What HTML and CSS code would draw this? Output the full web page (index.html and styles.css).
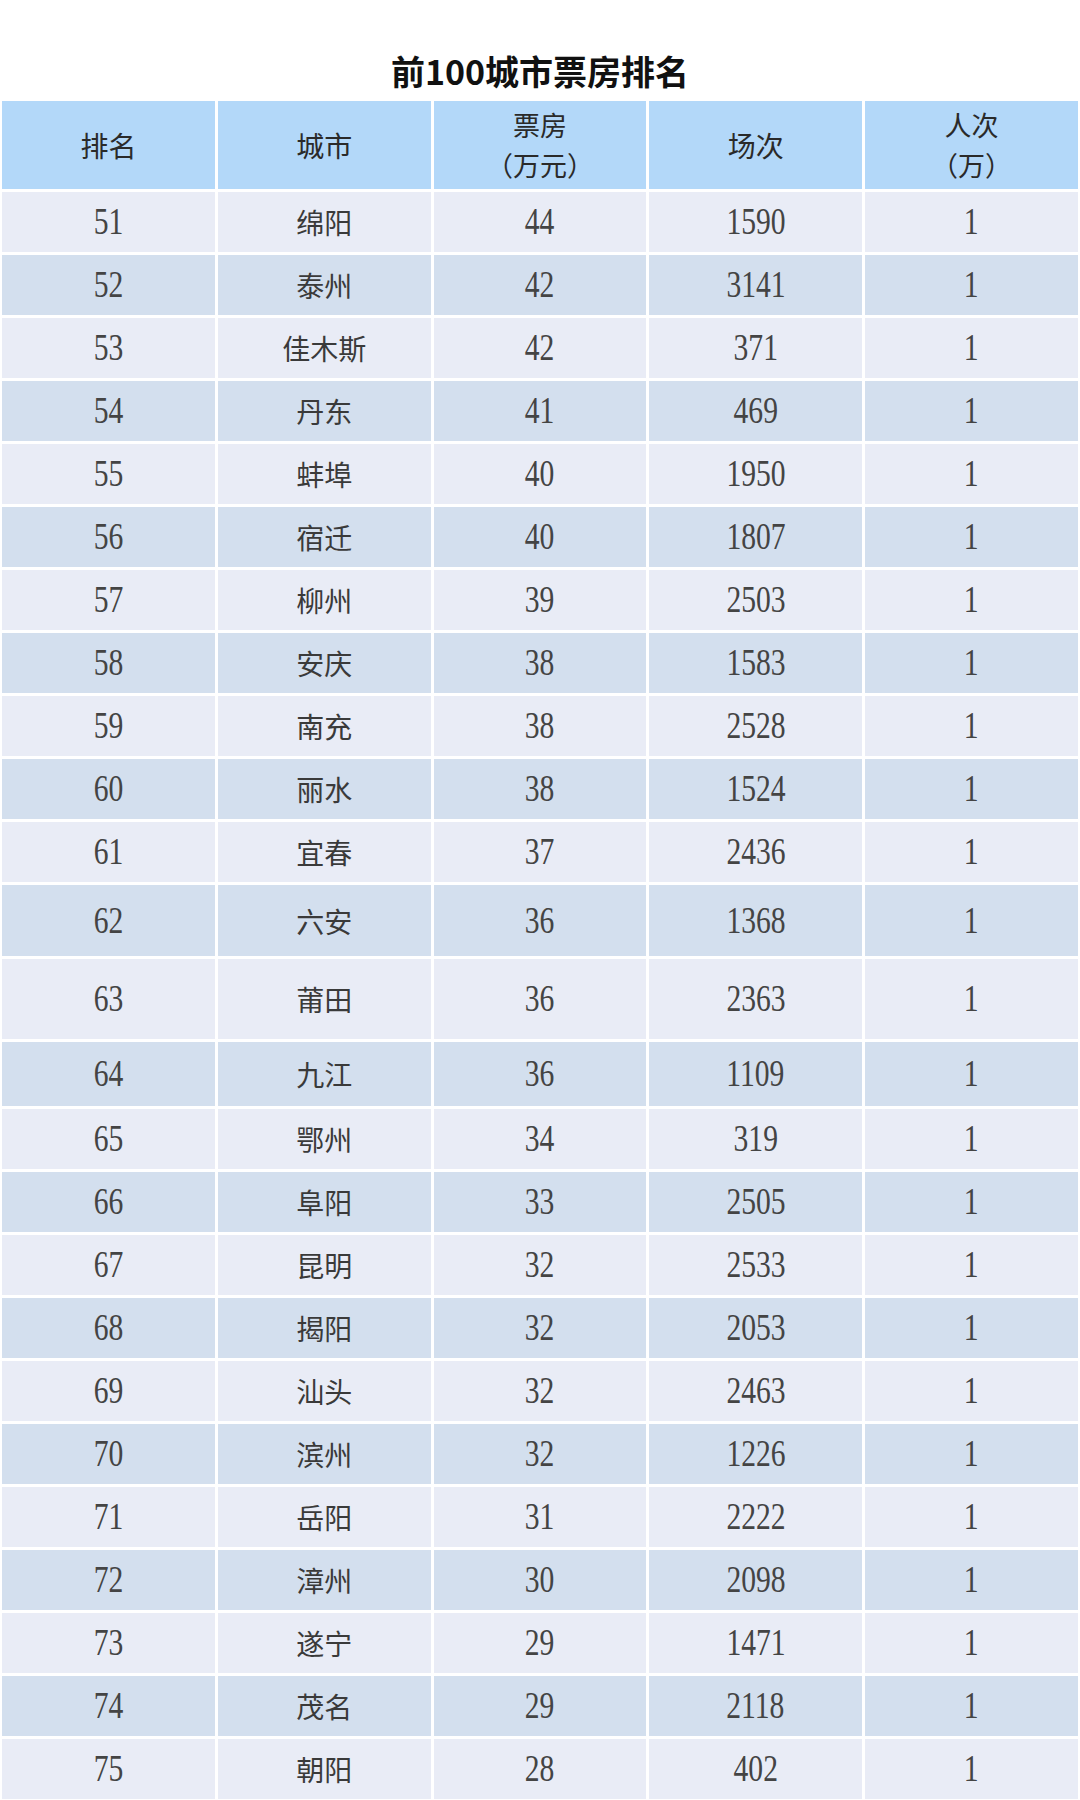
FILE: index.html
```html
<!DOCTYPE html>
<html lang="zh-CN">
<head>
<meta charset="utf-8">
<title>前100城市票房排名</title>
<link rel="stylesheet" href="styles.css">
</head>
<body>
<h1 class="title">前100城市票房排名</h1>
<div class="table">
  <div class="row head">
    <div class="cell">排名</div>
    <div class="cell">城市</div>
    <div class="cell two"><span class="line">票房</span><span class="line">（万元）</span></div>
    <div class="cell">场次</div>
    <div class="cell two"><span class="line">人次</span><span class="line">（万）</span></div>
  </div>
  <div class="row odd"><div class="cell"><span class="num">51</span></div><div class="cell">绵阳</div><div class="cell"><span class="num">44</span></div><div class="cell"><span class="num">1590</span></div><div class="cell"><span class="num">1</span></div></div>
  <div class="row even"><div class="cell"><span class="num">52</span></div><div class="cell">泰州</div><div class="cell"><span class="num">42</span></div><div class="cell"><span class="num">3141</span></div><div class="cell"><span class="num">1</span></div></div>
  <div class="row odd"><div class="cell"><span class="num">53</span></div><div class="cell">佳木斯</div><div class="cell"><span class="num">42</span></div><div class="cell"><span class="num">371</span></div><div class="cell"><span class="num">1</span></div></div>
  <div class="row even"><div class="cell"><span class="num">54</span></div><div class="cell">丹东</div><div class="cell"><span class="num">41</span></div><div class="cell"><span class="num">469</span></div><div class="cell"><span class="num">1</span></div></div>
  <div class="row odd"><div class="cell"><span class="num">55</span></div><div class="cell">蚌埠</div><div class="cell"><span class="num">40</span></div><div class="cell"><span class="num">1950</span></div><div class="cell"><span class="num">1</span></div></div>
  <div class="row even"><div class="cell"><span class="num">56</span></div><div class="cell">宿迁</div><div class="cell"><span class="num">40</span></div><div class="cell"><span class="num">1807</span></div><div class="cell"><span class="num">1</span></div></div>
  <div class="row odd"><div class="cell"><span class="num">57</span></div><div class="cell">柳州</div><div class="cell"><span class="num">39</span></div><div class="cell"><span class="num">2503</span></div><div class="cell"><span class="num">1</span></div></div>
  <div class="row even"><div class="cell"><span class="num">58</span></div><div class="cell">安庆</div><div class="cell"><span class="num">38</span></div><div class="cell"><span class="num">1583</span></div><div class="cell"><span class="num">1</span></div></div>
  <div class="row odd"><div class="cell"><span class="num">59</span></div><div class="cell">南充</div><div class="cell"><span class="num">38</span></div><div class="cell"><span class="num">2528</span></div><div class="cell"><span class="num">1</span></div></div>
  <div class="row even"><div class="cell"><span class="num">60</span></div><div class="cell">丽水</div><div class="cell"><span class="num">38</span></div><div class="cell"><span class="num">1524</span></div><div class="cell"><span class="num">1</span></div></div>
  <div class="row odd"><div class="cell"><span class="num">61</span></div><div class="cell">宜春</div><div class="cell"><span class="num">37</span></div><div class="cell"><span class="num">2436</span></div><div class="cell"><span class="num">1</span></div></div>
  <div class="row even r62"><div class="cell"><span class="num">62</span></div><div class="cell">六安</div><div class="cell"><span class="num">36</span></div><div class="cell"><span class="num">1368</span></div><div class="cell"><span class="num">1</span></div></div>
  <div class="row odd r63"><div class="cell"><span class="num">63</span></div><div class="cell">莆田</div><div class="cell"><span class="num">36</span></div><div class="cell"><span class="num">2363</span></div><div class="cell"><span class="num">1</span></div></div>
  <div class="row even r64"><div class="cell"><span class="num">64</span></div><div class="cell">九江</div><div class="cell"><span class="num">36</span></div><div class="cell"><span class="num">1109</span></div><div class="cell"><span class="num">1</span></div></div>
  <div class="row odd"><div class="cell"><span class="num">65</span></div><div class="cell">鄂州</div><div class="cell"><span class="num">34</span></div><div class="cell"><span class="num">319</span></div><div class="cell"><span class="num">1</span></div></div>
  <div class="row even"><div class="cell"><span class="num">66</span></div><div class="cell">阜阳</div><div class="cell"><span class="num">33</span></div><div class="cell"><span class="num">2505</span></div><div class="cell"><span class="num">1</span></div></div>
  <div class="row odd"><div class="cell"><span class="num">67</span></div><div class="cell">昆明</div><div class="cell"><span class="num">32</span></div><div class="cell"><span class="num">2533</span></div><div class="cell"><span class="num">1</span></div></div>
  <div class="row even"><div class="cell"><span class="num">68</span></div><div class="cell">揭阳</div><div class="cell"><span class="num">32</span></div><div class="cell"><span class="num">2053</span></div><div class="cell"><span class="num">1</span></div></div>
  <div class="row odd"><div class="cell"><span class="num">69</span></div><div class="cell">汕头</div><div class="cell"><span class="num">32</span></div><div class="cell"><span class="num">2463</span></div><div class="cell"><span class="num">1</span></div></div>
  <div class="row even"><div class="cell"><span class="num">70</span></div><div class="cell">滨州</div><div class="cell"><span class="num">32</span></div><div class="cell"><span class="num">1226</span></div><div class="cell"><span class="num">1</span></div></div>
  <div class="row odd"><div class="cell"><span class="num">71</span></div><div class="cell">岳阳</div><div class="cell"><span class="num">31</span></div><div class="cell"><span class="num">2222</span></div><div class="cell"><span class="num">1</span></div></div>
  <div class="row even"><div class="cell"><span class="num">72</span></div><div class="cell">漳州</div><div class="cell"><span class="num">30</span></div><div class="cell"><span class="num">2098</span></div><div class="cell"><span class="num">1</span></div></div>
  <div class="row odd"><div class="cell"><span class="num">73</span></div><div class="cell">遂宁</div><div class="cell"><span class="num">29</span></div><div class="cell"><span class="num">1471</span></div><div class="cell"><span class="num">1</span></div></div>
  <div class="row even"><div class="cell"><span class="num">74</span></div><div class="cell">茂名</div><div class="cell"><span class="num">29</span></div><div class="cell"><span class="num">2118</span></div><div class="cell"><span class="num">1</span></div></div>
  <div class="row odd"><div class="cell"><span class="num">75</span></div><div class="cell">朝阳</div><div class="cell"><span class="num">28</span></div><div class="cell"><span class="num">402</span></div><div class="cell"><span class="num">1</span></div></div>
</div>
</body>
</html>
```

FILE: styles.css
```css
html, body {
  margin: 0;
  padding: 0;
  background: #ffffff;
}

body {
  width: 1080px;
  font-family: "Noto Sans CJK SC", "Noto Sans", sans-serif;
  color: #363636;
}

.title {
  margin: 0;
  padding-top: 50px;
  height: 42px;
  margin-bottom: 9px;
  line-height: 42px;
  font-size: 34px;
  font-weight: 700;
  color: #111111;
  text-align: center;
}

.table {
  margin-left: 2px;
  width: 1076px;
  display: flex;
  flex-direction: column;
  gap: 3px;
}

.row {
  display: grid;
  grid-template-columns: repeat(5, 1fr);
  column-gap: 3px;
  height: 60px;
}

.cell {
  display: flex;
  align-items: center;
  justify-content: center;
  text-align: center;
  font-size: 28px;
  line-height: 40px;
  font-weight: 400;
  color: #3a3a3a;
}

.cell.two {
  flex-direction: column;
}

.line {
  display: block;
  font-size: 27px;
  line-height: 40px;
}

.head {
  height: 88px;
}

.head .cell {
  background: #b3d8f9;
  color: #2a2a2a;
}

.odd .cell {
  background: #e9ecf6;
}

.even .cell {
  background: #d3dfee;
}

.r62 { height: 71px; }
.r63 { height: 80px; }
.r64 { height: 64px; }

.num {
  display: inline-block;
  font-family: "Liberation Serif", "Times New Roman", serif;
  font-size: 37px;
  line-height: 40px;
  color: #444444;
  transform: scaleX(0.8);
}
```
